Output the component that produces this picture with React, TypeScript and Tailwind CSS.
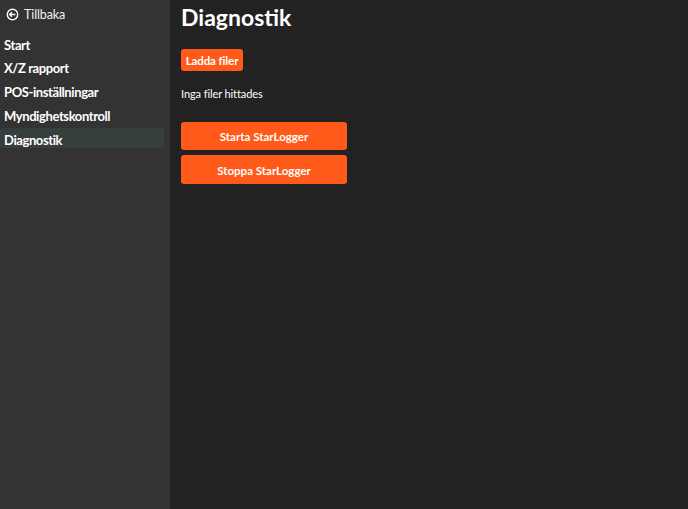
import React from 'react';

const menuItems = ['Start', 'X/Z rapport', 'POS-inställningar', 'Myndighetskontroll', 'Diagnostik'];

const BackIcon = () => (
  <svg width="13" height="13" viewBox="0 0 13 13" fill="none" stroke="#fff" strokeWidth="1.4">
    <circle cx="6.5" cy="6.5" r="5.2" />
    <path d="M9.4 6.5H3.8M5.9 4.3 3.7 6.5 5.9 8.7" />
  </svg>
);

export default function App() {
  return (
    <div className="flex h-[509px] w-[688px] overflow-hidden bg-[#222222] font-['Lato','Liberation_Sans',sans-serif] text-white">
      <aside className="flex w-[170px] shrink-0 flex-col bg-[#333333] pr-[6px]">
        <div className="flex h-[28px] items-center gap-[5px] pt-px pl-[6px] text-[12.5px] tracking-[-0.1px] text-[#f0f0f0]">
          <BackIcon />
          <span className="pt-px">Tillbaka</span>
        </div>
        <nav className="mt-[5px] flex flex-col gap-[3.7px]">
          {menuItems.map(item => (
            <div
              key={item}
              className={`flex h-[20px] items-center rounded-[2px] pt-[5px] pl-[4px] text-[13px] font-bold tracking-[-0.4px] ${item === 'Diagnostik' ? 'bg-[#363f3e]' : ''}`}
            >
              {item}
            </div>
          ))}
        </nav>
      </aside>
      <main className="flex flex-col items-start pl-[11px]">
        <h1 className="mt-[2px] text-[23px] leading-[30px] font-bold">Diagnostik</h1>
        <button className="mt-[17px] h-[22px] w-[62px] rounded-[3px] bg-[#ff5a1a] pt-px text-[11.5px] font-bold tracking-[-0.1px]">Ladda filer</button>
        <p className="mt-[16px] text-[11px] leading-[14px] tracking-[-0.1px]">Inga filer hittades</p>
        <div className="mt-[21px] flex flex-col gap-[5px]">
          <button className="h-[28px] w-[166px] rounded-[3px] bg-[#ff5a1a] pt-[2px] text-[11.5px] font-bold">Starta StarLogger</button>
          <button className="h-[29px] w-[166px] rounded-[3px] bg-[#ff5a1a] pt-[2px] text-[11.5px] font-bold">Stoppa StarLogger</button>
        </div>
      </main>
    </div>
  );
}
